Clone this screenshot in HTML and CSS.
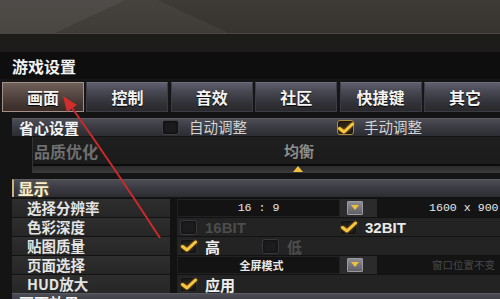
FILE: index.html
```html
<!DOCTYPE html>
<html lang="zh">
<head>
<meta charset="utf-8">
<title>游戏设置</title>
<link rel="stylesheet" href="styles.css">
</head>
<body>
<div class="app">
  <div class="backdrop"></div>
  <div class="strip"></div>
  <div class="titlebar">游戏设置</div>
  <nav class="tabs">
    <div class="tab active">画面</div>
    <div class="tab">控制</div>
    <div class="tab">音效</div>
    <div class="tab">社区</div>
    <div class="tab">快捷键</div>
    <div class="tab">其它</div>
  </nav>

  <div class="content">
    <section class="group">
      <div class="group-head">
        <span class="head-title">省心设置</span>
        <label class="opt opt-auto"><span class="box"></span><span class="opt-text">自动调整</span></label>
        <label class="opt opt-manual"><span class="box gold"><svg viewBox="0 0 18 12" class="tick"><path d="M2.5 6.5 L7 10 L15.5 2"/></svg></span><span class="opt-text">手动调整</span></label>
      </div>
      <div class="quality">
        <div class="quality-box">
          <div class="quality-row">
            <span class="q-label">品质优化</span>
            <span class="q-value">均衡</span>
          </div>
          <div class="track"><span class="thumb"></span></div>
        </div>
      </div>
    </section>

    <section class="group">
      <div class="group-head current"><span class="head-title">显示</span></div>
      <div class="rows">
        <div class="row">
          <div class="label">选择分辨率</div>
          <div class="value">
            <div class="field mono">16 : 9</div>
            <div class="dd-cell"><span class="dd-btn"></span></div>
            <div class="field2 mono">1600 x 900</div>
          </div>
        </div>
        <div class="row">
          <div class="label">色彩深度</div>
          <div class="value">
            <div class="choice w160 dim"><span class="box"></span><span class="latin">16BIT</span></div>
            <div class="choice"><span class="box on"><svg viewBox="0 0 18 12" class="tick"><path d="M2.5 6.5 L7 10 L15.5 2"/></svg></span><span class="latin">32BIT</span></div>
          </div>
        </div>
        <div class="row">
          <div class="label">贴图质量</div>
          <div class="value">
            <div class="choice w82"><span class="box on"><svg viewBox="0 0 18 12" class="tick"><path d="M2.5 6.5 L7 10 L15.5 2"/></svg></span><span class="cjk">高</span></div>
            <div class="choice dim"><span class="box"></span><span class="cjk">低</span></div>
          </div>
        </div>
        <div class="row">
          <div class="label">页面选择</div>
          <div class="value">
            <div class="field small">全屏模式</div>
            <div class="dd-cell"><span class="dd-btn"></span></div>
            <div class="field2 hint">窗口位置不变</div>
          </div>
        </div>
        <div class="row">
          <div class="label">HUD放大</div>
          <div class="value">
            <div class="choice"><span class="box on"><svg viewBox="0 0 18 12" class="tick"><path d="M2.5 6.5 L7 10 L15.5 2"/></svg></span><span class="cjk">应用</span></div>
          </div>
        </div>
      </div>
    </section>

    <section class="group">
      <div class="group-head"><span class="head-title">画面效果</span></div>
    </section>
  </div>

  <svg class="annot" viewBox="0 0 500 299" width="500" height="299">
    <path class="annot-line" d="M160 238 Q116 170 70 105"/>
    <polygon class="annot-head" points="63,96 77,105 67,112"/>
  </svg>
</div>
</body>
</html>
```

FILE: styles.css
```css
* { box-sizing: border-box; margin: 0; padding: 0; }

html, body {
  width: 500px;
  height: 299px;
  overflow: hidden;
}

body {
  background: #141414;
  font-family: "Noto Sans CJK SC", "Liberation Sans", sans-serif;
  color: #dcdcdc;
}

.app {
  position: relative;
  width: 500px;
  height: 299px;
  overflow: hidden;
}

/* top decorative backdrop */
.backdrop {
  height: 34px;
  background:
    linear-gradient(155deg, rgba(255,255,255,0.05) 0 22%, rgba(255,255,255,0) 22% 100%),
    linear-gradient(205deg, rgba(0,0,0,0) 0 60%, rgba(255,255,255,0.04) 60% 100%),
    linear-gradient(#3e3b37, #37342f);
  border-bottom: 1px solid #4a4743;
}

.strip {
  height: 18px;
  background: #1d1c1b;
}

.titlebar {
  height: 30px;
  background: #0e0e0e;
  padding-left: 12px;
  display: flex;
  align-items: center;
  font-size: 16px;
  font-weight: bold;
  color: #f2f2f2;
  border-bottom: 3px solid #151515;
}

/* tabs */
.tabs {
  display: grid;
  grid-template-columns: repeat(6, 82px);
  column-gap: 2.4px;
  padding-left: 2px;
  height: 30px;
  background: #161616;
}

.tab {
  display: flex;
  align-items: center;
  justify-content: center;
  font-size: 16px;
  font-weight: bold;
  color: #f4f4f4;
  text-shadow: 0 1px 1px #000;
  background: linear-gradient(#5e5e6e 0%, #45454f 35%, #303036 75%, #2a2a2d 100%);
  border: 1px solid #3c3c46;
  border-top-color: #6c6c7c;
}

.tab.active {
  background: linear-gradient(#6f5f5b 0%, #5a4b46 35%, #43352f 75%, #3a2c27 100%);
  border: 1px solid #a48f89;
}

/* content */
.content {
  padding-left: 12px;
  padding-top: 6px;
  display: flex;
  flex-direction: column;
}

.group-head {
  height: 18px;
  display: flex;
  align-items: center;
  background: linear-gradient(#4c4c54 0%, #3a3a42 50%, #2c2c33 100%);
  border-top: 1px solid #5a5a63;
  padding-left: 7px;
}

.head-title {
  font-size: 15px;
  font-weight: bold;
  color: #f4f4f4;
  line-height: 1;
}

.group-head.current {
  border-left: 2px solid #c9b27a;
  padding-left: 4px;
}

.group-head.current .head-title {
  color: #f6efcf;
  font-size: 15.5px;
  text-shadow: 0 0 3px rgba(200,170,90,0.6);
}

.opt {
  display: flex;
  align-items: center;
  gap: 10px;
}

.opt-auto { margin-left: 83px; }
.opt-manual { margin-left: 90px; }

.opt-text {
  font-size: 14.5px;
  color: #d2d2d2;
  line-height: 1;
}

/* checkbox */
.box {
  width: 17px;
  height: 15px;
  border-radius: 3px;
  background: #1b1b1e;
  border: 1px solid #3e3e44;
  box-shadow: inset 0 0 3px #000;
  display: flex;
  align-items: center;
  justify-content: center;
  flex: none;
}

.box.gold {
  border-color: #b08a3e;
  background: #2a2418;
}

.box.on {
  border-color: #2a2a2a;
  background: #1e1e1e;
}

.tick {
  width: 18px;
  height: 12px;
  overflow: visible;
}

.tick path {
  fill: none;
  stroke: #f5c63e;
  stroke-width: 3;
  stroke-linecap: round;
  stroke-linejoin: round;
  filter: drop-shadow(0 0 1px #c87a10);
}

/* quality block */
.quality {
  height: 37px;
  padding-left: 20px;
  padding-top: 1px;
  margin-bottom: 6px;
}

.quality-box {
  height: 100%;
  border-left: 1px solid #333;
  background: linear-gradient(#1f1f1f, #1a1a1a);
  display: flex;
  flex-direction: column;
}

.quality-row {
  height: 27px;
  display: flex;
  align-items: center;
}

.q-label {
  font-size: 16px;
  font-weight: bold;
  color: #6f6f6f;
  padding-left: 1px;
  line-height: 1;
}

.q-value {
  margin-left: 186px;
  font-size: 15px;
  font-weight: bold;
  color: #8d8d8d;
  line-height: 1;
}

.track {
  height: 9px;
  border-top: 2px solid #0c0c0c;
  background: linear-gradient(#2a2a2a, #3a3a3a);
  position: relative;
}

.thumb {
  position: absolute;
  left: 260px;
  top: 0;
  width: 0;
  height: 0;
  border-left: 5px solid transparent;
  border-right: 5px solid transparent;
  border-bottom: 6px solid #f3c13a;
}

/* settings rows */
.rows {
  display: flex;
  flex-direction: column;
  gap: 1px;
  padding-top: 2px;
  background: #121212;
}

.row {
  height: 18px;
  display: grid;
  grid-template-columns: 158px 1fr;
  column-gap: 7px;
}

.label {
  background: linear-gradient(#2e2e2e, #262626);
  padding-left: 15px;
  display: flex;
  align-items: center;
  font-size: 14.5px;
  font-weight: bold;
  color: #e4e4e4;
  line-height: 1;
  white-space: nowrap;
}

.value {
  background: #232323;
  display: flex;
  align-items: stretch;
}

.field {
  width: 163px;
  background: #131313;
  border: 1px solid #222;
  display: flex;
  align-items: center;
  justify-content: center;
  color: #e8e8e8;
  line-height: 1;
}

.mono {
  font-family: "Liberation Mono", "DejaVu Sans Mono", monospace;
  font-size: 11.6px;
}

.field.small {
  font-size: 11px;
  font-weight: bold;
  padding-left: 6px;
}

.dd-cell {
  width: 37px;
  background: #2b2b2b;
  display: flex;
  align-items: center;
  padding-left: 7px;
}

.dd-btn {
  width: 16px;
  height: 14px;
  background: linear-gradient(#8c8c92, #5f5f66);
  border: 1px solid #9a9aa0;
  border-radius: 1px;
  position: relative;
}

.dd-btn::after {
  content: "";
  position: absolute;
  left: 3px;
  top: 3px;
  border-left: 4px solid transparent;
  border-right: 4px solid transparent;
  border-top: 5px solid #f0bf3c;
}

.field2 {
  flex: 1;
  background: #141414;
  display: flex;
  align-items: center;
  padding-left: 52px;
  color: #e6e6e6;
  white-space: nowrap;
  line-height: 1;
}

.field2.hint {
  font-size: 10.5px;
  color: #4a4a4a;
  padding-left: 55px;
}

.choice {
  display: flex;
  align-items: center;
  gap: 8px;
  padding-left: 3px;
}

.choice.w160 { width: 160px; }
.choice.w82 { width: 82px; }

.choice.dim .box {
  opacity: 0.8;
}

.latin {
  font-family: "Liberation Sans", "Arial", sans-serif;
  font-size: 15px;
  font-weight: bold;
  color: #eaeaea;
  line-height: 1;
}

.cjk {
  font-size: 15px;
  font-weight: bold;
  color: #eeeeee;
  line-height: 1;
}

.choice.dim .latin,
.choice.dim .cjk {
  color: #4c4c4c;
}

/* annotation arrow */
.annot {
  position: absolute;
  left: 0;
  top: 0;
  pointer-events: none;
}

.annot-line {
  fill: none;
  stroke: #cc2a2a;
  stroke-width: 2;
}

.annot-head {
  fill: #d22c2c;
}
```
